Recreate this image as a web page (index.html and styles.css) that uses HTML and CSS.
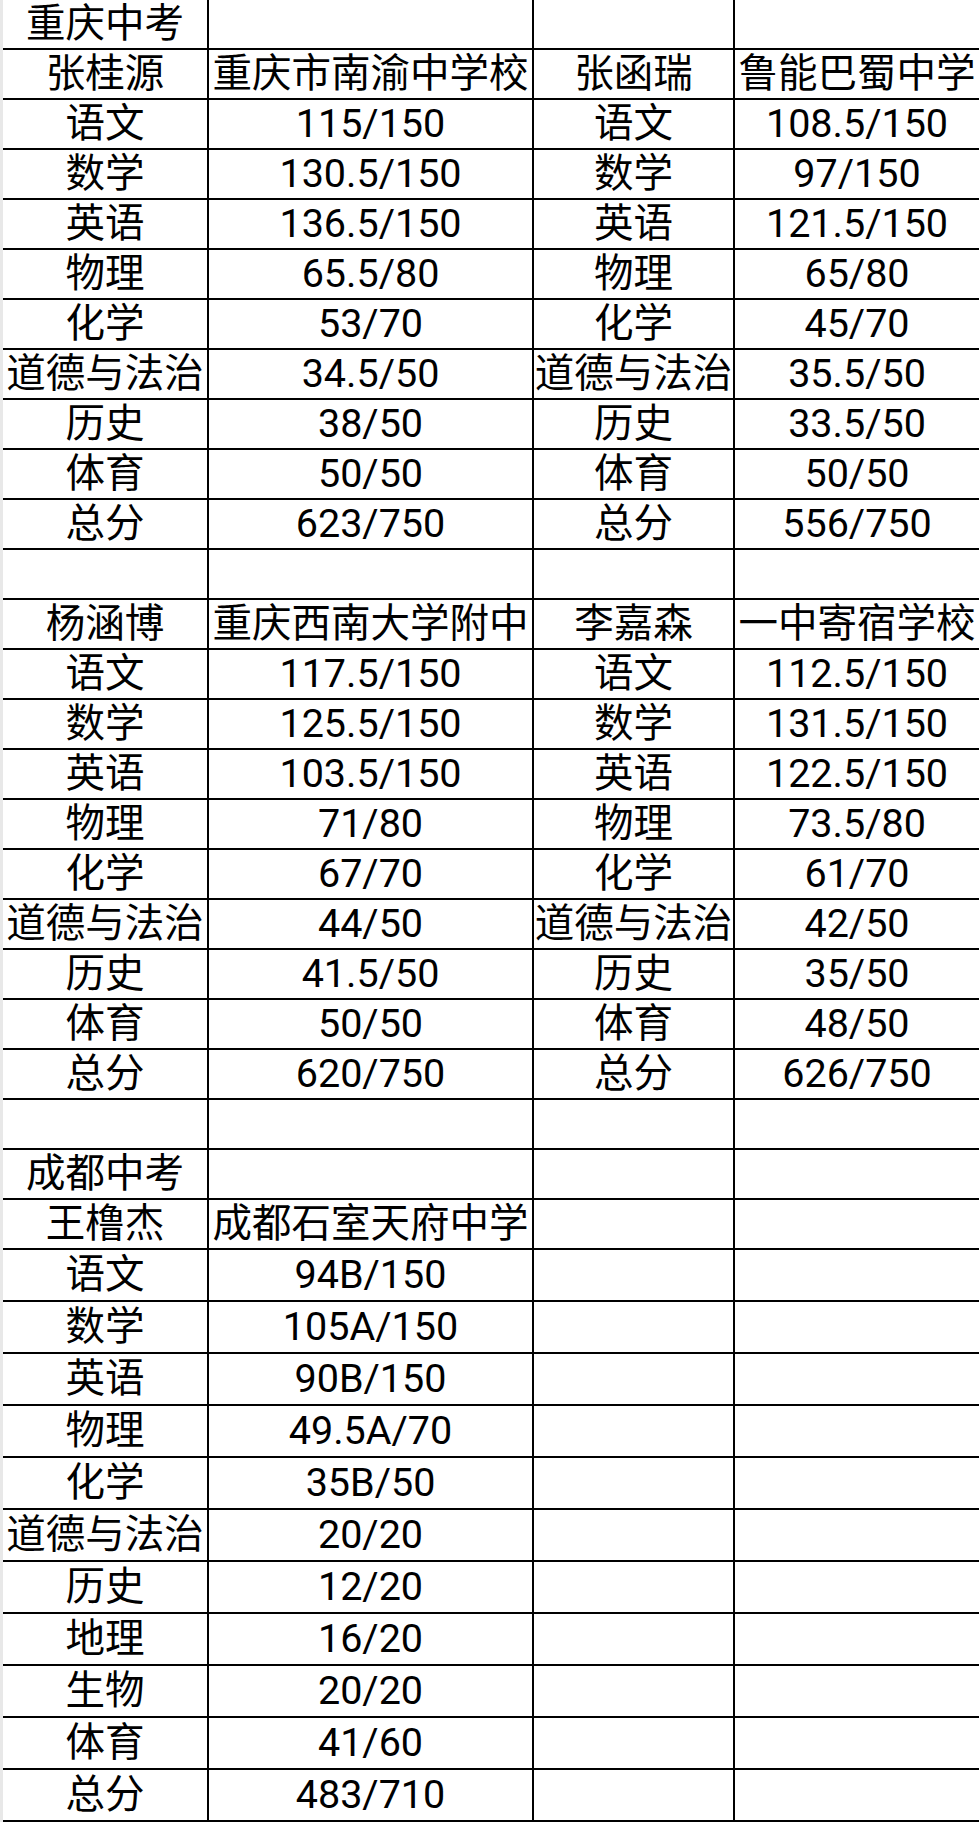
FILE: index.html
```html
<!DOCTYPE html>
<html lang="zh-CN">
<head>
<meta charset="utf-8">
<title>中考成绩</title>
<link rel="stylesheet" href="styles.css">
</head>
<body>
<div class="page">
  <div class="sheet">
    <div class="c">重庆中考</div><div class="c"></div><div class="c"></div><div class="c"></div>
    <div class="c">张桂源</div><div class="c">重庆市南渝中学校</div><div class="c">张函瑞</div><div class="c">鲁能巴蜀中学</div>
    <div class="c">语文</div><div class="c">115/150</div><div class="c">语文</div><div class="c">108.5/150</div>
    <div class="c">数学</div><div class="c">130.5/150</div><div class="c">数学</div><div class="c">97/150</div>
    <div class="c">英语</div><div class="c">136.5/150</div><div class="c">英语</div><div class="c">121.5/150</div>
    <div class="c">物理</div><div class="c">65.5/80</div><div class="c">物理</div><div class="c">65/80</div>
    <div class="c">化学</div><div class="c">53/70</div><div class="c">化学</div><div class="c">45/70</div>
    <div class="c">道德与法治</div><div class="c">34.5/50</div><div class="c">道德与法治</div><div class="c">35.5/50</div>
    <div class="c">历史</div><div class="c">38/50</div><div class="c">历史</div><div class="c">33.5/50</div>
    <div class="c">体育</div><div class="c">50/50</div><div class="c">体育</div><div class="c">50/50</div>
    <div class="c">总分</div><div class="c">623/750</div><div class="c">总分</div><div class="c">556/750</div>
    <div class="c"></div><div class="c"></div><div class="c"></div><div class="c"></div>
    <div class="c">杨涵博</div><div class="c">重庆西南大学附中</div><div class="c">李嘉森</div><div class="c">一中寄宿学校</div>
    <div class="c">语文</div><div class="c">117.5/150</div><div class="c">语文</div><div class="c">112.5/150</div>
    <div class="c">数学</div><div class="c">125.5/150</div><div class="c">数学</div><div class="c">131.5/150</div>
    <div class="c">英语</div><div class="c">103.5/150</div><div class="c">英语</div><div class="c">122.5/150</div>
    <div class="c">物理</div><div class="c">71/80</div><div class="c">物理</div><div class="c">73.5/80</div>
    <div class="c">化学</div><div class="c">67/70</div><div class="c">化学</div><div class="c">61/70</div>
    <div class="c">道德与法治</div><div class="c">44/50</div><div class="c">道德与法治</div><div class="c">42/50</div>
    <div class="c">历史</div><div class="c">41.5/50</div><div class="c">历史</div><div class="c">35/50</div>
    <div class="c">体育</div><div class="c">50/50</div><div class="c">体育</div><div class="c">48/50</div>
    <div class="c">总分</div><div class="c">620/750</div><div class="c">总分</div><div class="c">626/750</div>
    <div class="c"></div><div class="c"></div><div class="c"></div><div class="c"></div>
    <div class="c">成都中考</div><div class="c"></div><div class="c"></div><div class="c"></div>
    <div class="c">王橹杰</div><div class="c">成都石室天府中学</div><div class="c"></div><div class="c"></div>
    <div class="c">语文</div><div class="c">94B/150</div><div class="c"></div><div class="c"></div>
    <div class="c">数学</div><div class="c">105A/150</div><div class="c"></div><div class="c"></div>
    <div class="c">英语</div><div class="c">90B/150</div><div class="c"></div><div class="c"></div>
    <div class="c">物理</div><div class="c">49.5A/70</div><div class="c"></div><div class="c"></div>
    <div class="c">化学</div><div class="c">35B/50</div><div class="c"></div><div class="c"></div>
    <div class="c">道德与法治</div><div class="c">20/20</div><div class="c"></div><div class="c"></div>
    <div class="c">历史</div><div class="c">12/20</div><div class="c"></div><div class="c"></div>
    <div class="c">地理</div><div class="c">16/20</div><div class="c"></div><div class="c"></div>
    <div class="c">生物</div><div class="c">20/20</div><div class="c"></div><div class="c"></div>
    <div class="c">体育</div><div class="c">41/60</div><div class="c"></div><div class="c"></div>
    <div class="c">总分</div><div class="c">483/710</div><div class="c"></div><div class="c"></div>
  </div>
</div>
</body>
</html>
```
FILE: styles.css
```css
html, body {
  margin: 0;
  padding: 0;
  background: #ffffff;
}

.page {
  width: 979px;
  overflow: hidden;
  box-sizing: border-box;
  border-left: 3px solid #e8e8e8;
}

.sheet {
  display: grid;
  grid-template-columns: 204px 323px 199px 1fr;
  grid-template-rows: 48px repeat(24, 48px) repeat(11, 50px);
  gap: 2px;
  padding-bottom: 2px;
  background: #000000;
}

.c {
  background: #ffffff;
  display: flex;
  align-items: center;
  justify-content: center;
  white-space: nowrap;
  overflow: visible;
  font-family: Roboto, "Noto Sans CJK SC", sans-serif;
  font-size: 39.5px;
  line-height: 1;
  color: #000000;
}
```
